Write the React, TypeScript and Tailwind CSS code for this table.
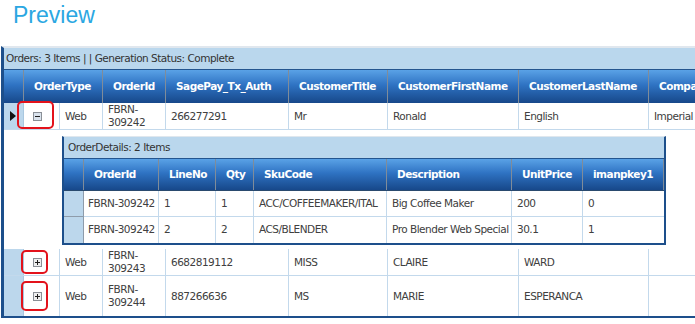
import React from 'react';

type Order = {
  type: string;
  id: string;
  auth: string;
  title: string;
  first: string;
  last: string;
  company: string;
};

const orders: Order[] = [
  { type: 'Web', id: 'FBRN-309242', auth: '266277291', title: 'Mr', first: 'Ronald', last: 'English', company: 'Imperial' },
  { type: 'Web', id: 'FBRN-309243', auth: '6682819112', title: 'MISS', first: 'CLAIRE', last: 'WARD', company: '' },
  { type: 'Web', id: 'FBRN-309244', auth: '887266636', title: 'MS', first: 'MARIE', last: 'ESPERANCA', company: '' },
];

const orderHeaders = [
  { label: 'OrderType', w: 'w-[79px]' },
  { label: 'OrderId', w: 'w-[63px]' },
  { label: 'SagePay_Tx_Auth', w: 'w-[123px]' },
  { label: 'CustomerTitle', w: 'w-[99px]' },
  { label: 'CustomerFirstName', w: 'w-[131px]' },
  { label: 'CustomerLastName', w: 'w-[130px]' },
  { label: 'CompanyName', w: 'w-[140px]' },
];

const orderCols: { key: keyof Order; w: string }[] = [
  { key: 'type', w: 'w-[43px]' },
  { key: 'id', w: 'w-[63px]' },
  { key: 'auth', w: 'w-[123px]' },
  { key: 'title', w: 'w-[99px]' },
  { key: 'first', w: 'w-[131px]' },
  { key: 'last', w: 'w-[130px]' },
  { key: 'company', w: 'w-[140px]' },
];

const detailHeaders = [
  { label: 'OrderId', w: 'w-[75px]' },
  { label: 'LineNo', w: 'w-[57px]' },
  { label: 'Qty', w: 'w-[38px]' },
  { label: 'SkuCode', w: 'w-[133px]' },
  { label: 'Description', w: 'w-[125px]' },
  { label: 'UnitPrice', w: 'w-[71px]' },
  { label: 'imanpkey1', w: 'w-[81px]' },
];

const details = [
  ['FBRN-309242', '1', '1', 'ACC/COFFEEMAKER/ITAL', 'Big Coffee Maker', '200', '0'],
  ['FBRN-309242', '2', '2', 'ACS/BLENDER', 'Pro Blender Web Special', '30.1', '1'],
];

const headBg = 'bg-linear-to-b from-[#5aa2e6] via-[#2f73c3] via-45% to-[#17488a]';

function ExpandIcon({ open }: { open: boolean }) {
  return (
    <svg width="9" height="9" viewBox="0 0 9 9" shapeRendering="crispEdges">
      <rect x="0.5" y="0.5" width="8" height="8" fill={open ? '#d9e2ec' : '#eeeeee'} stroke="#8a8f96" />
      <path d="M2 4.5h5" stroke="#1e1e1e" />
      {!open && <path d="M4.5 2v5" stroke="#1e1e1e" />}
    </svg>
  );
}

function HeadCell({ label, w }: { label: string; w: string }) {
  return (
    <div className={`${w} shrink-0 h-full border-r border-[#7f8c9a] pl-[10px] flex items-center text-white font-bold whitespace-nowrap overflow-hidden`}>
      {label}
    </div>
  );
}

function OrderRow({ order, open, h, ring }: { order: Order; open: boolean; h: string; ring: string }) {
  return (
    <div className={`flex ${h} border-b border-[#c3d9ec]`}>
      <div className="w-[20px] shrink-0 bg-[#bcd7ec] border-r border-[#a9c7df] flex items-center pl-[6px]">
        {open && (
          <svg width="6" height="10" viewBox="0 0 6 10">
            <polygon points="0,0 6,5 0,10" fill="#111" />
          </svg>
        )}
      </div>
      <div className="w-[36px] shrink-0 relative border-r border-[#c3d9ec] flex items-center pl-[9px]">
        <ExpandIcon open={open} />
        <div className={`absolute ${ring} border-2 border-[#e3121b] rounded-[5px] z-10`} />
      </div>
      {orderCols.map((c) => (
        <div key={c.key} className={`${c.w} shrink-0 border-r border-[#c3d9ec] pl-[5px] pr-[2px] flex items-center leading-[13px] overflow-hidden`}>
          {c.key === 'company' && order.company ? (
            <span className="whitespace-nowrap">
              {order.company} <span className="text-[#e8c020]">S</span>
            </span>
          ) : (
            order[c.key]
          )}
        </div>
      ))}
    </div>
  );
}

function OrderDetails() {
  return (
    <div className="w-[604px] border-x-2 border-b-2 border-[#1d4f8b] border-t border-t-[#dfe7ee]">
      <div className="h-[22px] bg-[#bad7ed] border-b border-[#24558f] pl-[4px] flex items-center text-[#333]">
        OrderDetails: 2 Items
      </div>
      <div className={`flex h-[32px] ${headBg} border-b border-[#2a4a6e]`}>
        <div className="w-[20px] shrink-0 h-full border-r border-[#7f8c9a]" />
        {detailHeaders.map((c) => (
          <HeadCell key={c.label} label={c.label} w={c.w} />
        ))}
      </div>
      {details.map((row, i) => (
        <div key={i} className={`flex h-[26px] ${i === 0 ? 'border-b border-[#c3d9ec]' : ''}`}>
          <div className={`w-[20px] shrink-0 bg-[#bcd7ec] border-r border-[#8e9cab] ${i === 0 ? 'border-b border-b-[#8e9cab] -mb-px' : ''}`} />
          {row.map((v, j) => (
            <div key={j} className={`${detailHeaders[j].w} shrink-0 border-r border-[#c3d9ec] pl-[5px] flex items-center whitespace-nowrap overflow-hidden last:border-r-0`}>
              {j === 0 ? <span className="-ml-px">{v}</span> : v}
            </div>
          ))}
        </div>
      ))}
    </div>
  );
}

export default function App() {
  return (
    <div className="w-[695px] h-[324px] overflow-hidden bg-white font-['DejaVu_Sans',Verdana,sans-serif] text-[10.5px] tracking-[-0.5px] text-[#404040]">
      <div className="h-[46px] pl-[13px] pt-[4px] font-['Liberation_Sans',Arial,sans-serif] text-[23px] leading-[23px] tracking-normal text-[#2ba7e2]">
        Preview
      </div>

      <div className="ml-[1px] w-[760px] border-t-2 border-l-[3px] border-b-2 border-[#1d4f8b] border-t-[#e0e7ee]">
        <div className="h-[22px] bg-[#bad7ed] border-b border-[#24558f] pl-[2px] flex items-center text-[#333]">
          Orders: 3 Items | | Generation Status: Complete
        </div>
        <div className={`flex h-[33px] ${headBg}`}>
          <div className="w-[20px] shrink-0 h-full border-r border-[#7f8c9a]" />
          {orderHeaders.map((c) => (
            <HeadCell key={c.label} label={c.label} w={c.w} />
          ))}
        </div>

        <OrderRow order={orders[0]} open h="h-[27px]" ring="left-[-7px] top-[-2px] w-[37px] h-[28px]" />
        <div className="pl-[58px] pt-[6px] pb-[4px]">
          <OrderDetails />
        </div>
        <OrderRow order={orders[1]} open={false} h="h-[27px]" ring="left-[-3px] top-[1px] w-[27px] h-[24px]" />
        <OrderRow order={orders[2]} open={false} h="h-[40px] border-b-0" ring="left-[-3px] top-[5px] w-[27px] h-[30px]" />
      </div>
    </div>
  );
}
